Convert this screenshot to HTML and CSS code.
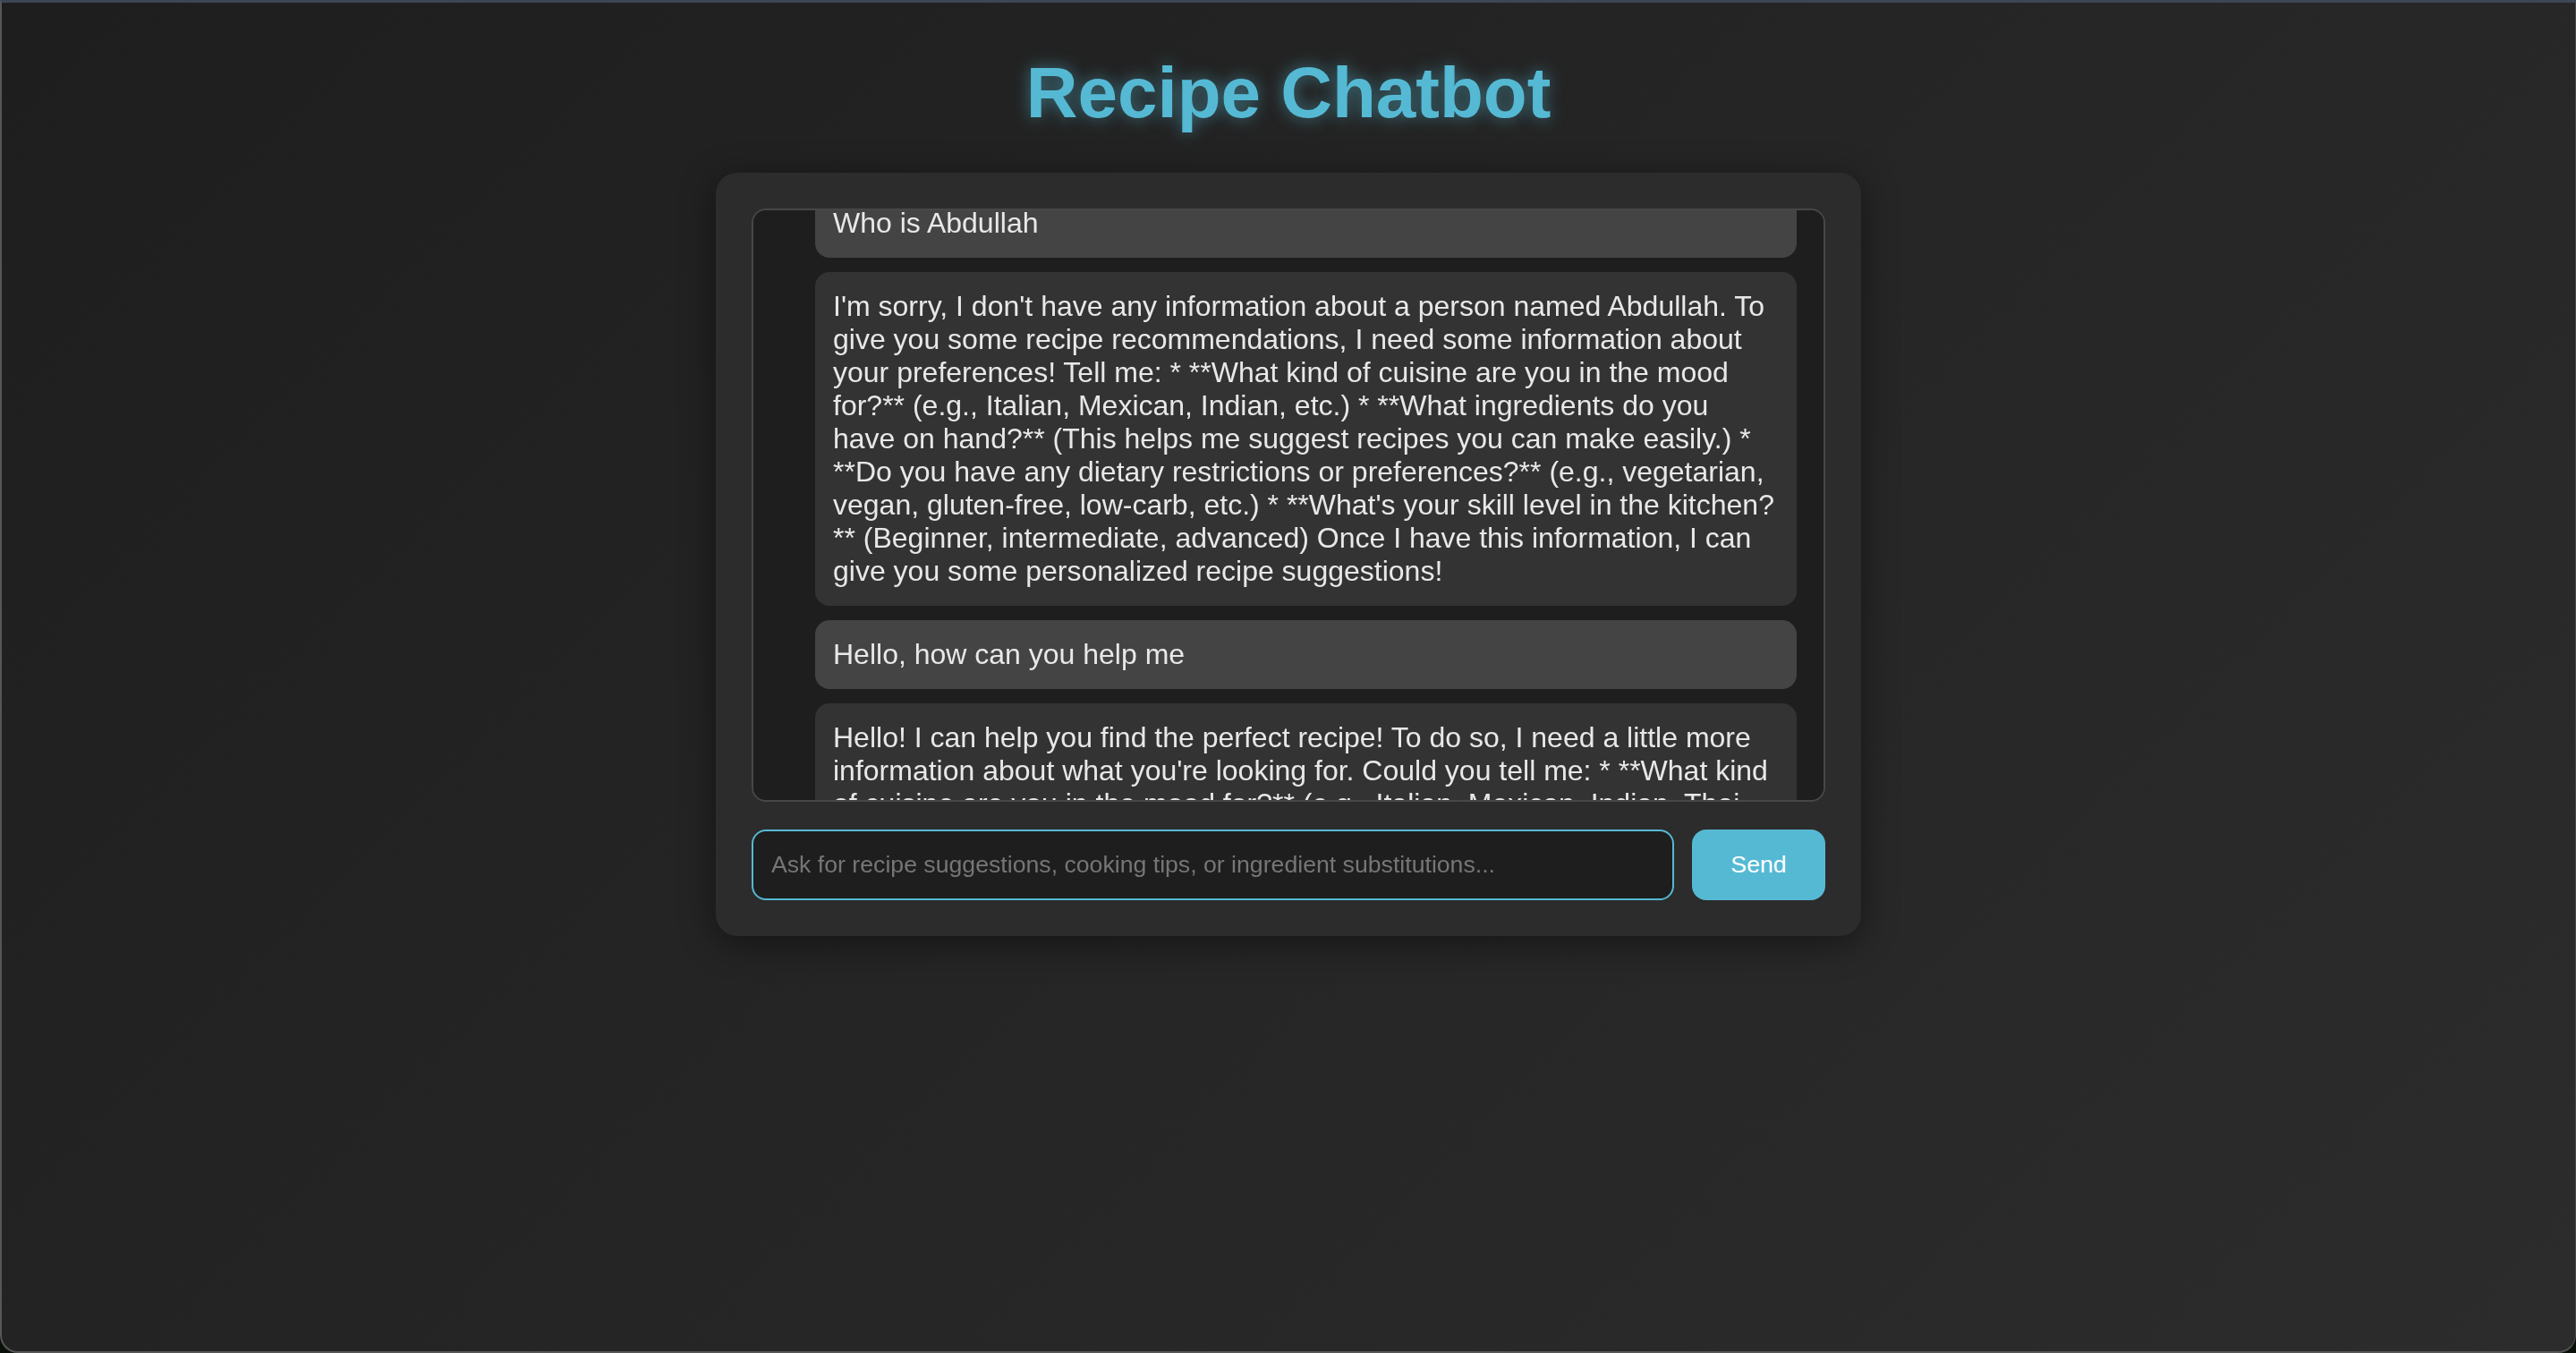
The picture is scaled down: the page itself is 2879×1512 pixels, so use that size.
FILE: index.html
```html
<!DOCTYPE html>
<html lang="en">
<head>
<meta charset="utf-8">
<title>Recipe Chatbot</title>
<link rel="stylesheet" href="styles.css">
</head>
<body>
<div class="window">
  <h1 class="title">Recipe Chatbot</h1>
  <div class="container">
    <div class="chat-box" id="chat-box">
      <div class="message user">Who is Abdullah</div>
      <div class="message bot">I'm sorry, I don't have any information about a person named Abdullah. To give you some recipe recommendations, I need some information about your preferences! Tell me: * **What kind of cuisine are you in the mood for?** (e.g., Italian, Mexican, Indian, etc.) * **What ingredients do you have on hand?** (This helps me suggest recipes you can make easily.) * **Do you have any dietary restrictions or preferences?** (e.g., vegetarian, vegan, gluten-free, low-carb, etc.) * **What's your skill level in the kitchen?** (Beginner, intermediate, advanced) Once I have this information, I can give you some personalized recipe suggestions!</div>
      <div class="message user">Hello, how can you help me</div>
      <div class="message bot">Hello! I can help you find the perfect recipe! To do so, I need a little more information about what you're looking for. Could you tell me: * **What kind of cuisine are you in the mood for?** (e.g., Italian, Mexican, Indian, Thai, etc.) * **What ingredients do you have on hand?** (This helps me suggest recipes you can make easily.)</div>
    </div>
    <div class="input-row">
      <input class="chat-input" type="text" placeholder="Ask for recipe suggestions, cooking tips, or ingredient substitutions..." autofocus>
      <button class="send-btn" type="button">Send</button>
    </div>
  </div>
</div>
<script src="script.js"></script>
</body>
</html>
```

FILE: styles.css
```css
html {
  background: #0b100b;
}

body {
  margin: 0;
  font-family: "Liberation Sans", Arial, sans-serif;
  color: #e3e3e3;
}

.window {
  box-sizing: border-box;
  min-height: 1512px;
  border-top: 3px solid #3d4556;
  border-left: 2px solid #575757;
  border-right: 1px solid #4a4a4a;
  border-bottom: 2px solid #575757;
  border-radius: 0 0 20px 20px;
  background: linear-gradient(135deg, #1e1e1e 0%, #262626 55%, #2c2c2c 100%);
  padding-top: 55px;
  overflow: hidden;
}

.title {
  margin: 0 0 43px;
  text-align: center;
  font-size: 80px;
  font-weight: bold;
  line-height: 92px;
  color: #55b9d4;
  text-shadow: 0 0 18px rgba(85, 185, 212, 0.55);
}

.container {
  width: 1280px;
  margin: 0 auto;
  box-sizing: border-box;
  padding: 40px;
  background: #2c2c2c;
  border-radius: 24px;
  box-shadow: 0 8px 40px rgba(0, 0, 0, 0.45);
}

.chat-box {
  box-sizing: border-box;
  height: 663px;
  border: 2px solid #474747;
  border-radius: 16px;
  background: #1e1e1e;
  padding: 30px 30px 30px 69px;
  overflow-y: auto;
  scrollbar-width: none;
  display: flex;
  flex-direction: column;
  gap: 16px;
}

.chat-box::-webkit-scrollbar {
  display: none;
}

.message {
  flex: none;
  padding: 20px 23px 20px 20px;
  border-radius: 16px;
  font-size: 32px;
  line-height: normal;
  color: #e8e8e8;
}

.message.user {
  background: #444444;
}

.message.bot {
  background: #333333;
}

.input-row {
  display: flex;
  gap: 20px;
  margin-top: 31px;
}

.chat-input {
  flex: 1;
  box-sizing: border-box;
  height: 79px;
  padding: 0 20px;
  border: 2px solid #55b9d4;
  border-radius: 16px;
  background: #1e1e1e;
  color: #e6e6e6;
  caret-color: #ffffff;
  font-family: "Liberation Sans", Arial, sans-serif;
  font-size: 26.67px;
  outline: none;
}

.chat-input::placeholder {
  color: #767676;
}

.send-btn {
  flex: none;
  width: 149px;
  height: 79px;
  border: none;
  border-radius: 16px;
  background: #55b9d4;
  color: #ffffff;
  font-family: "Liberation Sans", Arial, sans-serif;
  font-size: 26.67px;
  cursor: pointer;
}
```

FILE: script.js
```js
document.getElementById('chat-box').scrollTop = 54;
```
